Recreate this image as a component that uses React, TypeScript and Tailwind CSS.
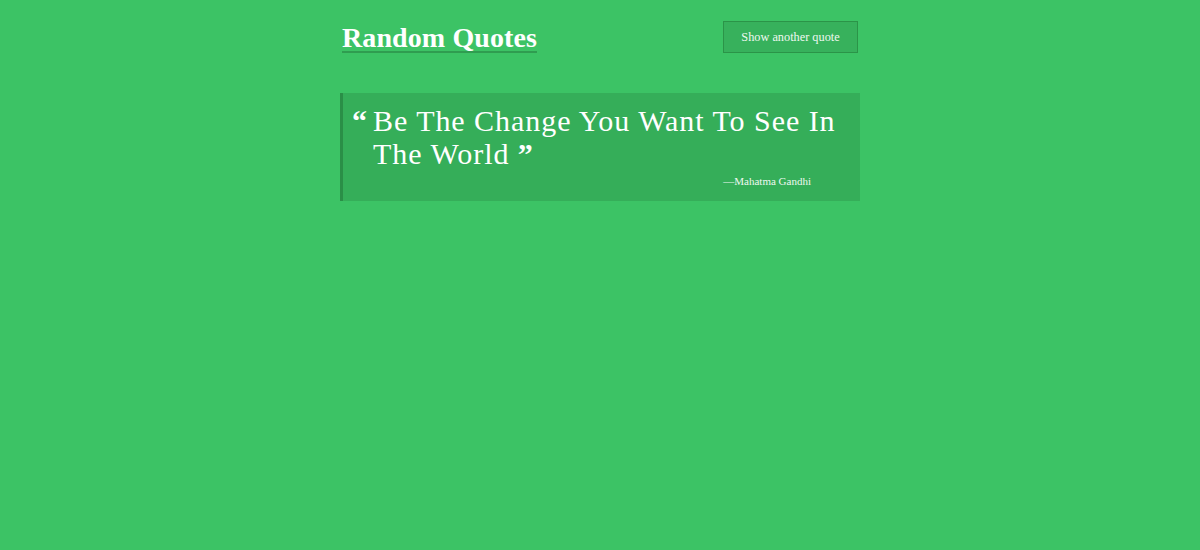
import React from "react";

export default function App() {
  return (
    <div
      className="min-h-[550px] w-full bg-[#3cc365] text-white"
      style={{ fontFamily: '"Liberation Serif", "DejaVu Serif", serif' }}
    >
      <div className="mx-auto w-[520px] pt-[21px]">
        <header className="flex items-end justify-between">
          <h1 className="ml-[2px] border-b-2 border-[#2f9d50] text-[28px] font-bold leading-[27px] tracking-[0.1px]">
            Random Quotes
          </h1>
          <button className="mr-[2px] h-[32px] w-[135px] border border-[#2b9448] bg-[#37b15c] text-[12.3px] text-[#eef8f0]">
            Show another quote
          </button>
        </header>

        <div className="mt-[40px] border-l-[3px] border-[#2a8f47] bg-[#35ae59] pb-[13px] pl-[9px] pr-[12px] pt-[11px]">
          <div className="flex">
            <span className="w-[21px] shrink-0 text-[30px] font-bold leading-[33px]">“</span>
            <p className="text-[30px] leading-[33px] tracking-[0.95px]">
              Be The Change You Want To See In The World <span className="font-bold">”</span>
            </p>
          </div>
          <div className="mt-[5px] pr-[37px] text-right text-[11px] leading-[13px] text-[#eef8f0]">
            —Mahatma Gandhi
          </div>
        </div>
      </div>
    </div>
  );
}
